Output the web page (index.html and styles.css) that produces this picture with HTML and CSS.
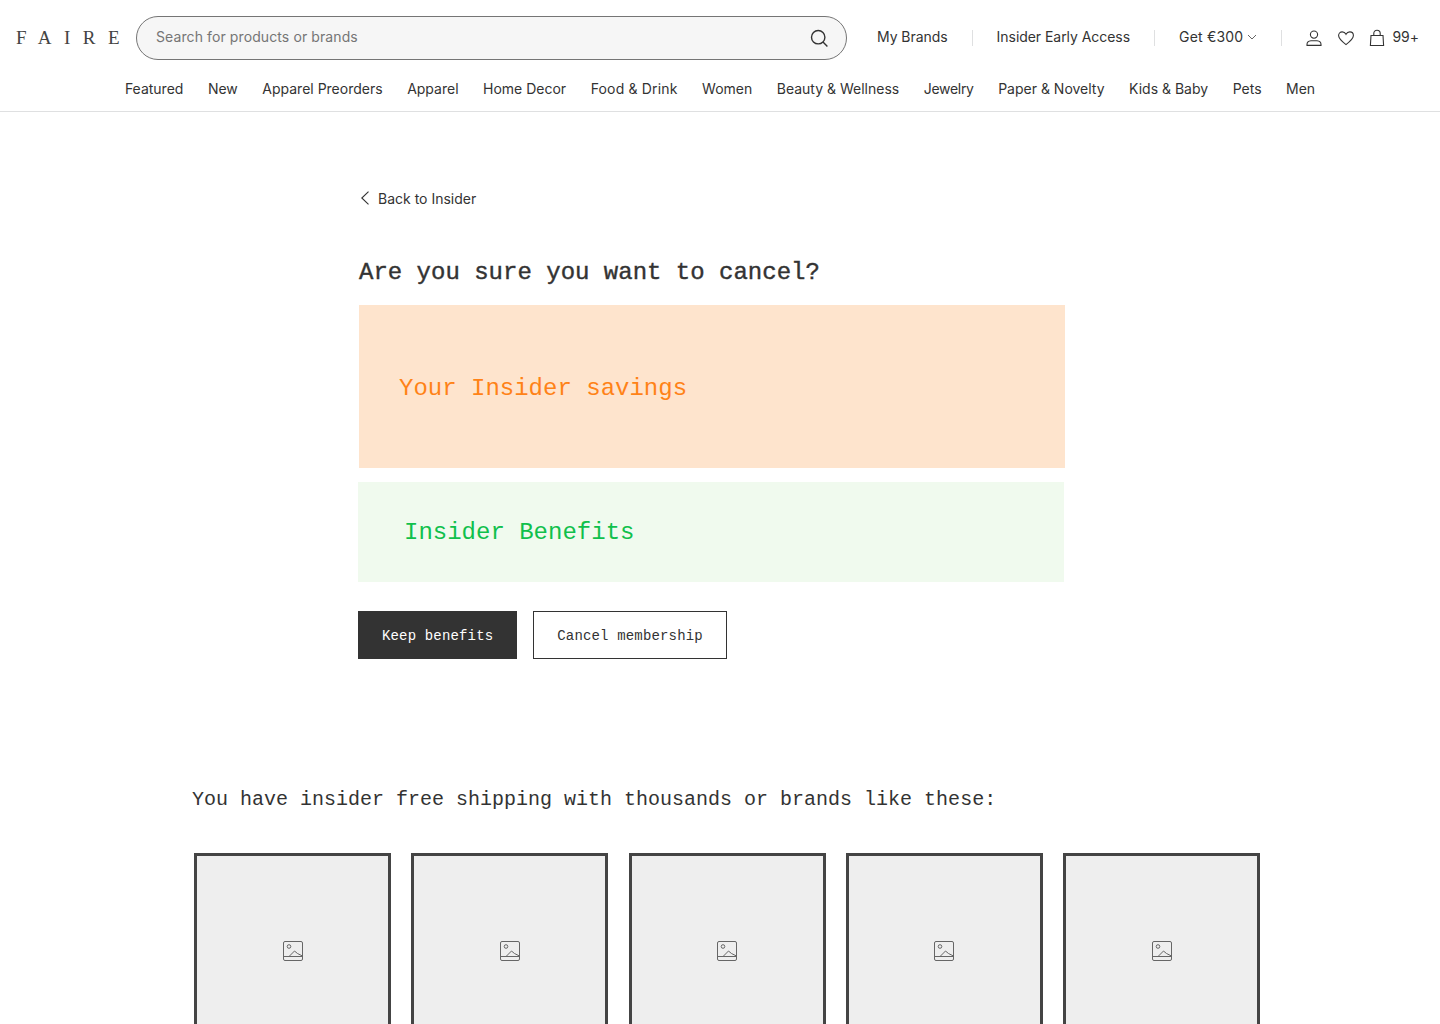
FILE: index.html
```html
<!DOCTYPE html>
<html lang="en">
<head>
<meta charset="utf-8">
<title>Faire Insider</title>
<link rel="stylesheet" href="styles.css">
</head>
<body>
<header class="header">
  <div class="top-row">
    <a class="logo">FAIRE</a>
    <div class="search">
      <span class="search-text">Search for products or brands</span>
      <svg class="search-icon" width="20" height="20" viewBox="0 0 20 20" fill="none" stroke="#333" stroke-width="1.4"><circle cx="9.2" cy="9.2" r="6.7"/><path d="M14 14l4.4 4.4"/></svg>
    </div>
    <nav class="top-links">
      <a class="top-link">My Brands</a>
      <span class="divider"></span>
      <a class="top-link">Insider Early Access</a>
      <span class="divider"></span>
      <a class="top-link get">Get €300
        <svg width="10" height="6" viewBox="0 0 10 6" fill="none" stroke="#666" stroke-width="1"><path d="M1 1l4 4 4-4"/></svg>
      </a>
      <span class="divider"></span>
      <span class="icons">
        <svg width="18" height="18" viewBox="0 0 18 18" fill="none" stroke="#333" stroke-width="1.1"><circle cx="9" cy="5.6" r="3.6"/><path d="M2 16.4h14v-1c0-2-2-3.4-4-3.6H6c-2 .2-4 1.6-4 3.6z"/></svg>
        <svg width="18" height="18" viewBox="0 0 18 18" fill="none" stroke="#333" stroke-width="1.1"><path d="M9 15.6C5 12.6 1.6 10 1.6 6.6 1.6 4.2 3.4 2.9 5.2 2.9c1.6 0 3 .9 3.8 2.4.8-1.5 2.2-2.4 3.8-2.4 1.8 0 3.6 1.3 3.6 3.7 0 3.4-3.4 6-7.4 9z"/></svg>
        <span class="bag">
          <svg width="16" height="18" viewBox="0 0 16 18" fill="none" stroke="#333" stroke-width="1.1"><path d="M2 6.5h12l.6 10H1.4zM4.8 6.5V4.3C4.8 2.5 6.2 1.2 8 1.2s3.2 1.3 3.2 3.1v2.2"/></svg>
          <span class="top-link">99+</span>
        </span>
      </span>
    </nav>
  </div>
  <nav class="cat-row">
    <a>Featured</a><a>New</a><a>Apparel Preorders</a><a>Apparel</a><a>Home Decor</a><a class="cat-wide">Food &amp; Drink</a><a>Women</a><a>Beauty &amp; Wellness</a><a class="cat-narrow">Jewelry</a><a>Paper &amp; Novelty</a><a>Kids &amp; Baby</a><a>Pets</a><a>Men</a>
  </nav>
</header>
<main class="main">
  <section class="cancel">
    <a class="back">
      <svg width="10" height="14" viewBox="0 0 10 14" fill="none" stroke="#333" stroke-width="1.1"><path d="M8.5 .6L1.8 7l6.7 6.4"/></svg>
      Back to Insider
    </a>
    <h1 class="title">Are you sure you want to cancel?</h1>
    <div class="panel savings"><h2>Your Insider savings</h2></div>
    <div class="panel benefits"><h2>Insider Benefits</h2></div>
    <div class="actions">
      <button class="btn primary">Keep benefits</button>
      <button class="btn secondary">Cancel membership</button>
    </div>
  </section>
  <section class="brands">
    <h3 class="brands-title">You have insider free shipping with thousands or brands like these:</h3>
    <div class="grid">
      <div class="card"><svg width="20" height="20" viewBox="0 0 20 20" fill="none" stroke="#666" stroke-width="1"><rect x=".5" y=".5" width="19" height="19" rx="1.5"/><path d="M.5 15.5h19M6 15.5l5.5-5.5 3 2.5 5 2.5"/><circle cx="6" cy="5.5" r="1.8"/></svg></div>
      <div class="card"><svg width="20" height="20" viewBox="0 0 20 20" fill="none" stroke="#666" stroke-width="1"><rect x=".5" y=".5" width="19" height="19" rx="1.5"/><path d="M.5 15.5h19M6 15.5l5.5-5.5 3 2.5 5 2.5"/><circle cx="6" cy="5.5" r="1.8"/></svg></div>
      <div class="card"><svg width="20" height="20" viewBox="0 0 20 20" fill="none" stroke="#666" stroke-width="1"><rect x=".5" y=".5" width="19" height="19" rx="1.5"/><path d="M.5 15.5h19M6 15.5l5.5-5.5 3 2.5 5 2.5"/><circle cx="6" cy="5.5" r="1.8"/></svg></div>
      <div class="card"><svg width="20" height="20" viewBox="0 0 20 20" fill="none" stroke="#666" stroke-width="1"><rect x=".5" y=".5" width="19" height="19" rx="1.5"/><path d="M.5 15.5h19M6 15.5l5.5-5.5 3 2.5 5 2.5"/><circle cx="6" cy="5.5" r="1.8"/></svg></div>
      <div class="card"><svg width="20" height="20" viewBox="0 0 20 20" fill="none" stroke="#666" stroke-width="1"><rect x=".5" y=".5" width="19" height="19" rx="1.5"/><path d="M.5 15.5h19M6 15.5l5.5-5.5 3 2.5 5 2.5"/><circle cx="6" cy="5.5" r="1.8"/></svg></div>
    </div>
  </section>
</main>
</body>
</html>
```

FILE: styles.css
```css
* { box-sizing: border-box; }
html, body { margin: 0; padding: 0; height: 1024px; overflow: hidden; background: #fff; }
body { font-family: "Inter", "Liberation Sans", sans-serif; color: #333; font-size: 14px; }

.header { height: 112px; padding-top: 16px; border-bottom: 1px solid #dfe0e1; }
.top-row { display: flex; align-items: center; height: 44px; padding-left: 16px; }

.logo { font-family: "Liberation Serif", serif; font-size: 19px; letter-spacing: 12.5px; width: 120px; color: #444; white-space: nowrap; }
.search { width: 711px; height: 44px; border: 1px solid #757575; border-radius: 22px; background: #f6f6f6; display: flex; align-items: center; justify-content: space-between; padding: 0 17px 0 19px; }
.search-text { color: #757575; font-size: 14px; letter-spacing: 0.1px; margin-top: -3px; }
.top-links { display: flex; align-items: center; margin-left: 30px; }
.top-link { font-size: 14px; color: #333; white-space: nowrap; letter-spacing: -0.05px; line-height: 17px; margin-top: -3px; }
.divider { width: 1px; height: 16px; background: #dfe0e1; margin: 0 24px; }
.get { display: inline-flex; align-items: center; gap: 4px; letter-spacing: 0.2px; }
.icons { display: flex; align-items: center; gap: 14px; margin-left: -1px; }
.bag { display: flex; align-items: center; gap: 7px; }

.cat-row { display: flex; justify-content: center; gap: 24.5px; margin-top: 18px; height: 20px; align-items: center; }
.cat-row a { font-size: 14px; color: #333; white-space: nowrap; }
.cat-row .cat-wide { letter-spacing: 0.17px; }
.cat-row .cat-narrow { letter-spacing: -0.3px; }

.main { display: flex; flex-direction: column; }
.cancel { width: 707px; margin-left: 358px; padding-top: 78px; }
.back { display: flex; align-items: center; gap: 8px; height: 16px; font-size: 14px; padding-left: 2px; }
.title { font-family: "Liberation Mono", monospace; font-size: 24px; font-weight: 400; -webkit-text-stroke: 0.4px #333; line-height: 32px; margin: 51px 0 0; padding-left: 1px; color: #333; }
.panel { display: flex; align-items: center; }
.panel h2 { font-family: "Liberation Mono", monospace; font-size: 24px; font-weight: 400; margin: 0; }
.savings { height: 163px; margin-top: 16px; margin-left: 1px; width: 706px; background: #fee4cd; padding: 4px 0 0 40px; }
.savings h2 { color: #ff8217; }
.benefits { height: 100px; margin-top: 14px; width: 706px; background: #f0faee; padding-left: 46px; }
.benefits h2 { color: #10c04c; }
.actions { display: flex; gap: 16px; margin-top: 29px; }
.btn { font-family: "Liberation Mono", monospace; font-size: 14px; letter-spacing: .16px; height: 48px; padding: 2px 23px 0; border: 1px solid #333; border-radius: 0; }
.primary { background: #333; color: #fff; }
.secondary { background: #fff; color: #333; }

.brands { margin-top: 128px; padding-left: 192px; }
.brands-title { font-family: "Liberation Mono", monospace; font-size: 20px; font-weight: 400; line-height: 26px; margin: 0; color: #333; }
.grid { display: flex; gap: 20.25px; margin-top: 40px; margin-left: 2px; }
.card { width: 197px; height: 196px; border: 3px solid #444; background: #eee; display: flex; align-items: center; justify-content: center; }
```
